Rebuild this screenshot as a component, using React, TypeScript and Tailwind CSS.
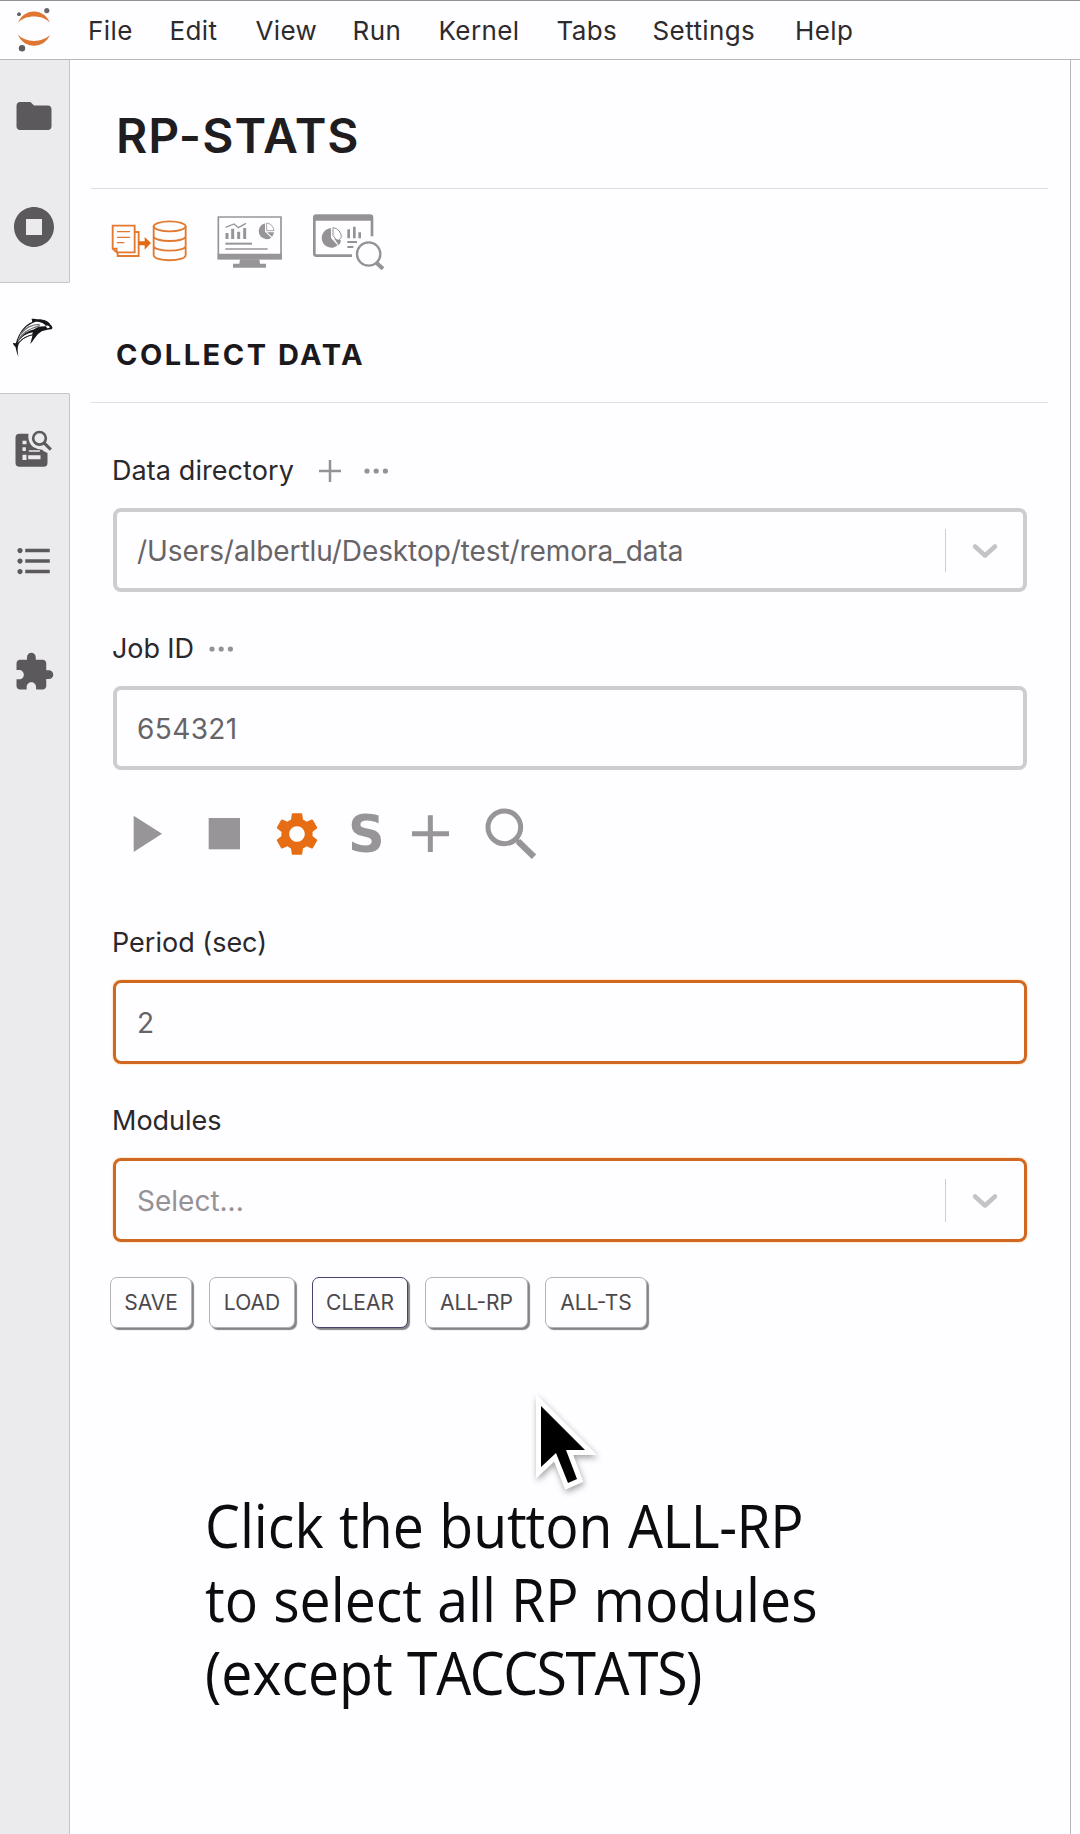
import type { ReactNode } from "react";
import {
  MdExtension,
  MdFolder,
  MdFormatListBulleted,
  MdSettings,
  MdStopCircle,
} from "react-icons/md";

const menuItems = [
  { label: "File", cls: "w-[81.500px]" },
  { label: "Edit", cls: "w-[86px]" },
  { label: "View", cls: "w-[97px]" },
  { label: "Run", cls: "w-[86px]" },
  { label: "Kernel", cls: "w-[118px]" },
  { label: "Tabs", cls: "w-[96px]" },
  { label: "Settings", cls: "w-[142.500px]" },
  { label: "Help", cls: "w-[60px]" },
];

const actions = [
  { label: "SAVE", cls: "w-[82px] border-[#b4b2b5]" },
  { label: "LOAD", cls: "w-[86px] border-[#b4b2b5]" },
  { label: "CLEAR", cls: "w-[96px] border-[#45446b]" },
  { label: "ALL-RP", cls: "w-[103px] border-[#b4b2b5]" },
  { label: "ALL-TS", cls: "w-[102px] border-[#b4b2b5]" },
];

function JupyterLogo() {
  return (
    <svg viewBox="0 0 40 46" className="h-[46px] w-[40px]">
      <path d="M4 15.800C7 8.600 13 4.600 20 4.600s13 4 16 11.200C32 11.600 26.500 9.600 20 9.600S8 11.600 4 15.800Z" fill="#df7631" />
      <path d="M4 27.800C7 34.800 13 38.800 20 38.800s13-4 16-11C32 31.800 26.500 33.900 20 33.900S8 31.800 4 27.800Z" fill="#df7631" />
      <circle cx="5" cy="7.200" r="1.900" fill="#5f5d60" />
      <circle cx="32.800" cy="3.600" r="2.600" fill="#69676a" />
      <circle cx="8" cy="41.200" r="3.200" fill="#5f5d60" />
    </svg>
  );
}

function DolphinIcon() {
  return (
    <svg viewBox="34.500 705 138 138" className="size-[46px]">
      <path
        d="M98 726C98 720 97 718 95 717C101 715 108 716 113 718C132 717 148 724 153 734C158 738 160 742 158 746C154 749 149 748 144 749C130 751 122 755 115 763C107 771 102 782 92 792C95 783 97 775 99 766C86 768 70 776 61 787C54 796 53 810 57 831C51 818 50 809 48 801C44 797 41 793 40 789L49 790C57 760 74 735 98 726Z"
        fill="#161517"
      />
      <path d="M54 785C62 757 80 735 108 725C124 725 136 731 140 739C124 738 112 742 104 748C86 752 66 764 54 785Z" fill="#fefdff" />
      <path d="M54 789C66 769 84 759 100 757L98 764C82 767 68 774 58 787Z" fill="#fefdff" />
      <path d="M57 779C70 758 90 745 122 737M62 763C76 745 98 733 120 733" fill="none" stroke="#6f6d72" strokeWidth="4" />
      <path d="M139 738C144 735 150 738 151 743L143 745Z" fill="#fefdff" />
      <path d="M55 792C66 776 84 767 101 764" fill="none" stroke="#2a282b" strokeWidth="3" />
    </svg>
  );
}

function InspectorIcon() {
  return (
    <svg viewBox="34.500 108 138 138" className="size-[46px]">
      <path
        d="M60 131H87C84 151 93 169 110 175C116 178 122 179 128 179L133 184L144 189V219Q144 230 133 230H60Q48 230 48 218V143Q48 131 60 131Z"
        fill="#5b595c"
      />
      <path d="M69 152h12v11H69zM69 172h10v11H69zM69 194h12v16H69zM86 196h37v12H86zM88 181h33v4H88z" fill="#ebeaec" />
      <circle cx="120" cy="145" r="19" fill="none" stroke="#5b595c" strokeWidth="8" />
      <path d="M133 158L154 179" stroke="#5b595c" strokeWidth="9" />
    </svg>
  );
}

function CollectIcon() {
  return (
    <svg viewBox="30 39 240 180" className="h-[60px] w-[80px]" fill="none" stroke="#e2792f" strokeWidth="5.500">
      <path d="M38 77H104V157H50L38 146Z" />
      <path d="M104 96H116V168H53V157M38 146H50V157" />
      <path d="M51 95H90M51 112H90M51 128H73" strokeWidth="4" />
      <path d="M116 124H134V111L153 129L134 149V136H116Z" fill="#e36a14" stroke="none" />
      <ellipse cx="209" cy="79" rx="48" ry="15" />
      <path d="M161 79V165C161 186 257 186 257 165V79M161 108C161 128 257 128 257 108M161 137C161 157 257 157 257 137" />
    </svg>
  );
}

function MonitorIcon() {
  return (
    <svg viewBox="345 39 210 180" className="h-[60px] w-[70px]" fill="none" stroke="#979598">
      <path d="M355 51H543V176H355Z" strokeWidth="5" />
      <path d="M353 161H546V178H353Z" fill="#979598" stroke="none" />
      <path d="M420 178H478L480 191H498V203H399V191H418Z" fill="#979598" stroke="none" />
      <path d="M381 117V99M398 117V86M416 117V95M434 117V84" strokeWidth="9" />
      <path d="M377 82L402 72L415 83L438 70" strokeWidth="4" />
      <path d="M376 131H456" strokeWidth="6" />
      <path d="M376 147H503" strokeWidth="4" />
      <path d="M495 70A24 24 0 1 0 514 113L495 95Z" fill="#979598" stroke="none" />
      <path d="M500 69A25 25 0 0 1 522 92H500Z" strokeWidth="2.500" />
      <path d="M501 97H522A25 25 0 0 1 516 110Z" fill="#979598" stroke="none" />
    </svg>
  );
}

function ReportIcon() {
  return (
    <svg viewBox="630 39 231 180" className="h-[60px] w-[77px]" fill="none" stroke="#949295">
      <path d="M756 167H649Q643 167 643 161V52Q643 47 649 47H810Q816 47 816 53V109" strokeWidth="8" />
      <path d="M643 55H816" strokeWidth="15" />
      <path d="M693 85A29 29 0 1 0 713 136L693 114Z" fill="#949295" stroke="none" />
      <path d="M699 83A28 28 0 0 1 724 112L713 124L699 107Z" strokeWidth="3" />
      <path d="M703 116L723 121Q722 130 716 136Z" fill="#949295" stroke="none" />
      <path d="M746 115V88M763 115V80M779 115V97" strokeWidth="8" />
      <path d="M742 126H771M742 141H760" strokeWidth="6" />
      <circle cx="806" cy="162" r="35" strokeWidth="7" />
      <path d="M829 188L849 206" strokeWidth="12" />
    </svg>
  );
}

function Dots() {
  return (
    <svg viewBox="0 0 25 6" className="mb-[2px] h-[6px] w-[25px]" fill="#949295">
      <circle cx="3" cy="3" r="2.600" />
      <circle cx="12.200" cy="3" r="2.600" />
      <circle cx="21.400" cy="3" r="2.600" />
    </svg>
  );
}

function Label({ children }: { children: ReactNode }) {
  return <div className="mb-[17px] -ml-px flex h-10 items-center pt-px text-[27px] text-[#2a282b]">{children}</div>;
}

function SelectArrow() {
  return (
    <div className="ml-auto flex items-center">
      <span className="h-[43px] w-[1.500px] bg-[#cfcdd0]" />
      <svg viewBox="0 0 30 20" className="mr-[23px] ml-[24px] h-[20px] w-[30px]" fill="none" stroke="#c5c3c6" strokeWidth="4.500" strokeLinecap="round" strokeLinejoin="round">
        <path d="M5 5.500L15 14.500L25 5.500" />
      </svg>
    </div>
  );
}

function Field({ children, active = false }: { children: ReactNode; active?: boolean }) {
  return (
    <div
      className={
        active
          ? "flex h-[84px] items-center rounded-[8px] border-[3px] border-[#d06822] pt-px pr-px pl-[21px] text-[28px] text-[#666467] shadow-[0_0_2px_#ffbf70]"
          : "flex h-[84px] items-center rounded-[8px] border-4 border-[#cecccf] pt-px pl-[20px] text-[28px] text-[#666467]"
      }
    >
      {children}
    </div>
  );
}

export default function App() {
  return (
    <div className="relative flex h-[1834px] w-[1080px] flex-col overflow-hidden bg-[#fefdff] font-['Inter',sans-serif]">
      <header className="flex h-[60px] items-center border-t border-b border-t-[#929093] border-b-[#b9b7ba]">
        <div className="w-[88px] pl-[14px]">
          <JupyterLogo />
        </div>
        <nav className="mt-px flex text-[26px] tracking-[0.4px] text-[#2d2b2e]">
          {menuItems.map((item) => (
            <span key={item.label} className={item.cls}>
              {item.label}
            </span>
          ))}
        </nav>
      </header>

      <div className="flex grow">
        <aside className="flex w-[70px] flex-col text-[#5b595c]">
          <div className="flex h-[111px] items-center justify-center border-r border-[#c6c4c7] bg-[#ebeaec] pr-[2px]">
            <MdFolder size={42} />
          </div>
          <div className="flex h-[111px] items-center justify-center border-r border-[#c6c4c7] bg-[#ebeaec] pr-[2px]">
            <MdStopCircle size={48} />
          </div>
          <div className="flex h-[112px] items-center justify-center border-y border-r border-y-[#c6c4c7] border-r-transparent pr-[2px]">
            <DolphinIcon />
          </div>
          <div className="flex grow flex-col border-r border-[#c6c4c7] bg-[#ebeaec] pr-[2px]">
            <div className="flex h-[110px] items-center justify-center">
              <InspectorIcon />
            </div>
            <div className="flex h-[114px] items-center justify-center">
              <MdFormatListBulleted size={42} />
            </div>
            <div className="flex h-[108px] items-center justify-center">
              <MdExtension size={42} />
            </div>
          </div>
        </aside>

        <main className="w-[1000px]">
          <div className="mr-[22px] ml-[21px] h-[129px] border-b border-[#dddbde] pt-[46px] pl-[25px]">
            <h1 className="text-[48px] leading-[60px] font-semibold tracking-[1px] text-[#1f1d20]">RP-STATS</h1>
          </div>
          <div className="mr-[22px] ml-[21px] h-[214px] border-b border-[#e2e0e3] pt-6 pl-[19px]">
            <div className="flex gap-[25px]">
              <CollectIcon />
              <MonitorIcon />
              <ReportIcon />
            </div>
            <h2 className="mt-[52px] pl-[6px] text-[29px] leading-[60px] font-bold tracking-[2.500px] text-[#1b191c]">COLLECT DATA</h2>
          </div>

          <div className="ml-[43px] w-[914px] pt-12">
            <Label>
              <span className="tracking-[0.080px]">Data directory</span>
              <svg viewBox="0 0 24 24" className="mr-[22px] mb-[2px] ml-6 size-6" stroke="#949295" strokeWidth="2.500">
                <path d="M12 1V23M1 12H23" />
              </svg>
              <Dots />
            </Label>
            <Field>
              <span className="tracking-[-0.080px]">/Users/albertlu/Desktop/test/remora_data</span>
              <SelectArrow />
            </Field>

            <div className="mt-[37px]">
              <Label>
                <span className="mr-[15px] tracking-[-0.100px]">Job ID</span>
                <Dots />
              </Label>
              <Field>
                <span className="tracking-[0.400px]">654321</span>
              </Field>
            </div>

            <div className="mt-[34px] ml-[17px] flex h-[60px] items-center">
              <svg viewBox="120 552 105 180" className="h-[60px] w-[35px]" fill="#979598">
                <path d="M131 587L216 641L131 696Z" />
              </svg>
              <svg viewBox="345 552 120 180" className="ml-10 h-[60px] w-[40px]" fill="#979598">
                <path d="M356 594H450V688H356Z" />
              </svg>
              <MdSettings size={52} className="ml-[26px] text-[#e66d14]" />
              <span className="mt-[2px] ml-[25px] w-[61px] font-['DejaVu_Sans',sans-serif] text-[51px] leading-[60px] font-bold text-[#979598]">S</span>
              <svg viewBox="957 552 129 180" className="h-[60px] w-[43px]" stroke="#979598" strokeWidth="15">
                <path d="M966 641H1077M1021 586V696" />
              </svg>
              <svg viewBox="1176 552 174 180" className="ml-[30px] h-[60px] w-[58px]" fill="none" stroke="#979598">
                <circle cx="1243" cy="622" r="49" strokeWidth="15" />
                <path d="M1284 664L1332 710" strokeWidth="19" />
                <path d="M1276 656L1288 668" strokeWidth="11" />
              </svg>
            </div>

            <div className="mt-[59px]">
              <Label>Period (sec)</Label>
              <Field active>2</Field>
            </div>

            <div className="mt-[37px]">
              <Label>Modules</Label>
              <Field active>
                <span className="text-[#949295]">Select...</span>
                <SelectArrow />
              </Field>
            </div>

            <div className="mt-[35px] -ml-[3px] flex gap-[17px]">
              {actions.map((a) => (
                <button
                  key={a.label}
                  className={`${a.cls} flex h-[51px] items-center justify-center rounded-[7px] border-[1.500px] bg-[#fefdff] text-[21px] text-[#4b494c] shadow-[2px_2px_1px_#858386]`}
                >
                  {a.label}
                </button>
              ))}
            </div>

            <div className="mt-[160px] ml-[92px] origin-left scale-x-[0.908] font-['Open_Sans',sans-serif] text-[61px] leading-[73.500px] whitespace-nowrap text-[#0c0b0d]">
              <p className="[word-spacing:1.200px]">
                Click the bu<span className="tracking-[-1.500px]">t</span>ton <span className="tracking-[-0.600px]">ALL-RP</span>
              </p>
              <p className="[word-spacing:0.800px]">to select all RP modules</p>
              <p>
                (except <span className="tracking-[-1.600px]">TACCSTATS)</span>
              </p>
            </div>
          </div>
        </main>

        <div className="grow border-l border-[#b9b7ba]" />
      </div>

      <svg viewBox="0 0 80 110" className="absolute top-[1391px] left-[526px] h-[110px] w-[80px] drop-shadow-[1px_3px_3px_rgba(0,0,0,0.350)]">
        <path
          d="M15 15L59 59H40L51 88L42 92L30 62L15 76Z"
          fill="#000"
          stroke="#fff"
          strokeWidth="10"
          paintOrder="stroke"
          strokeLinejoin="miter"
        />
      </svg>
    </div>
  );
}
